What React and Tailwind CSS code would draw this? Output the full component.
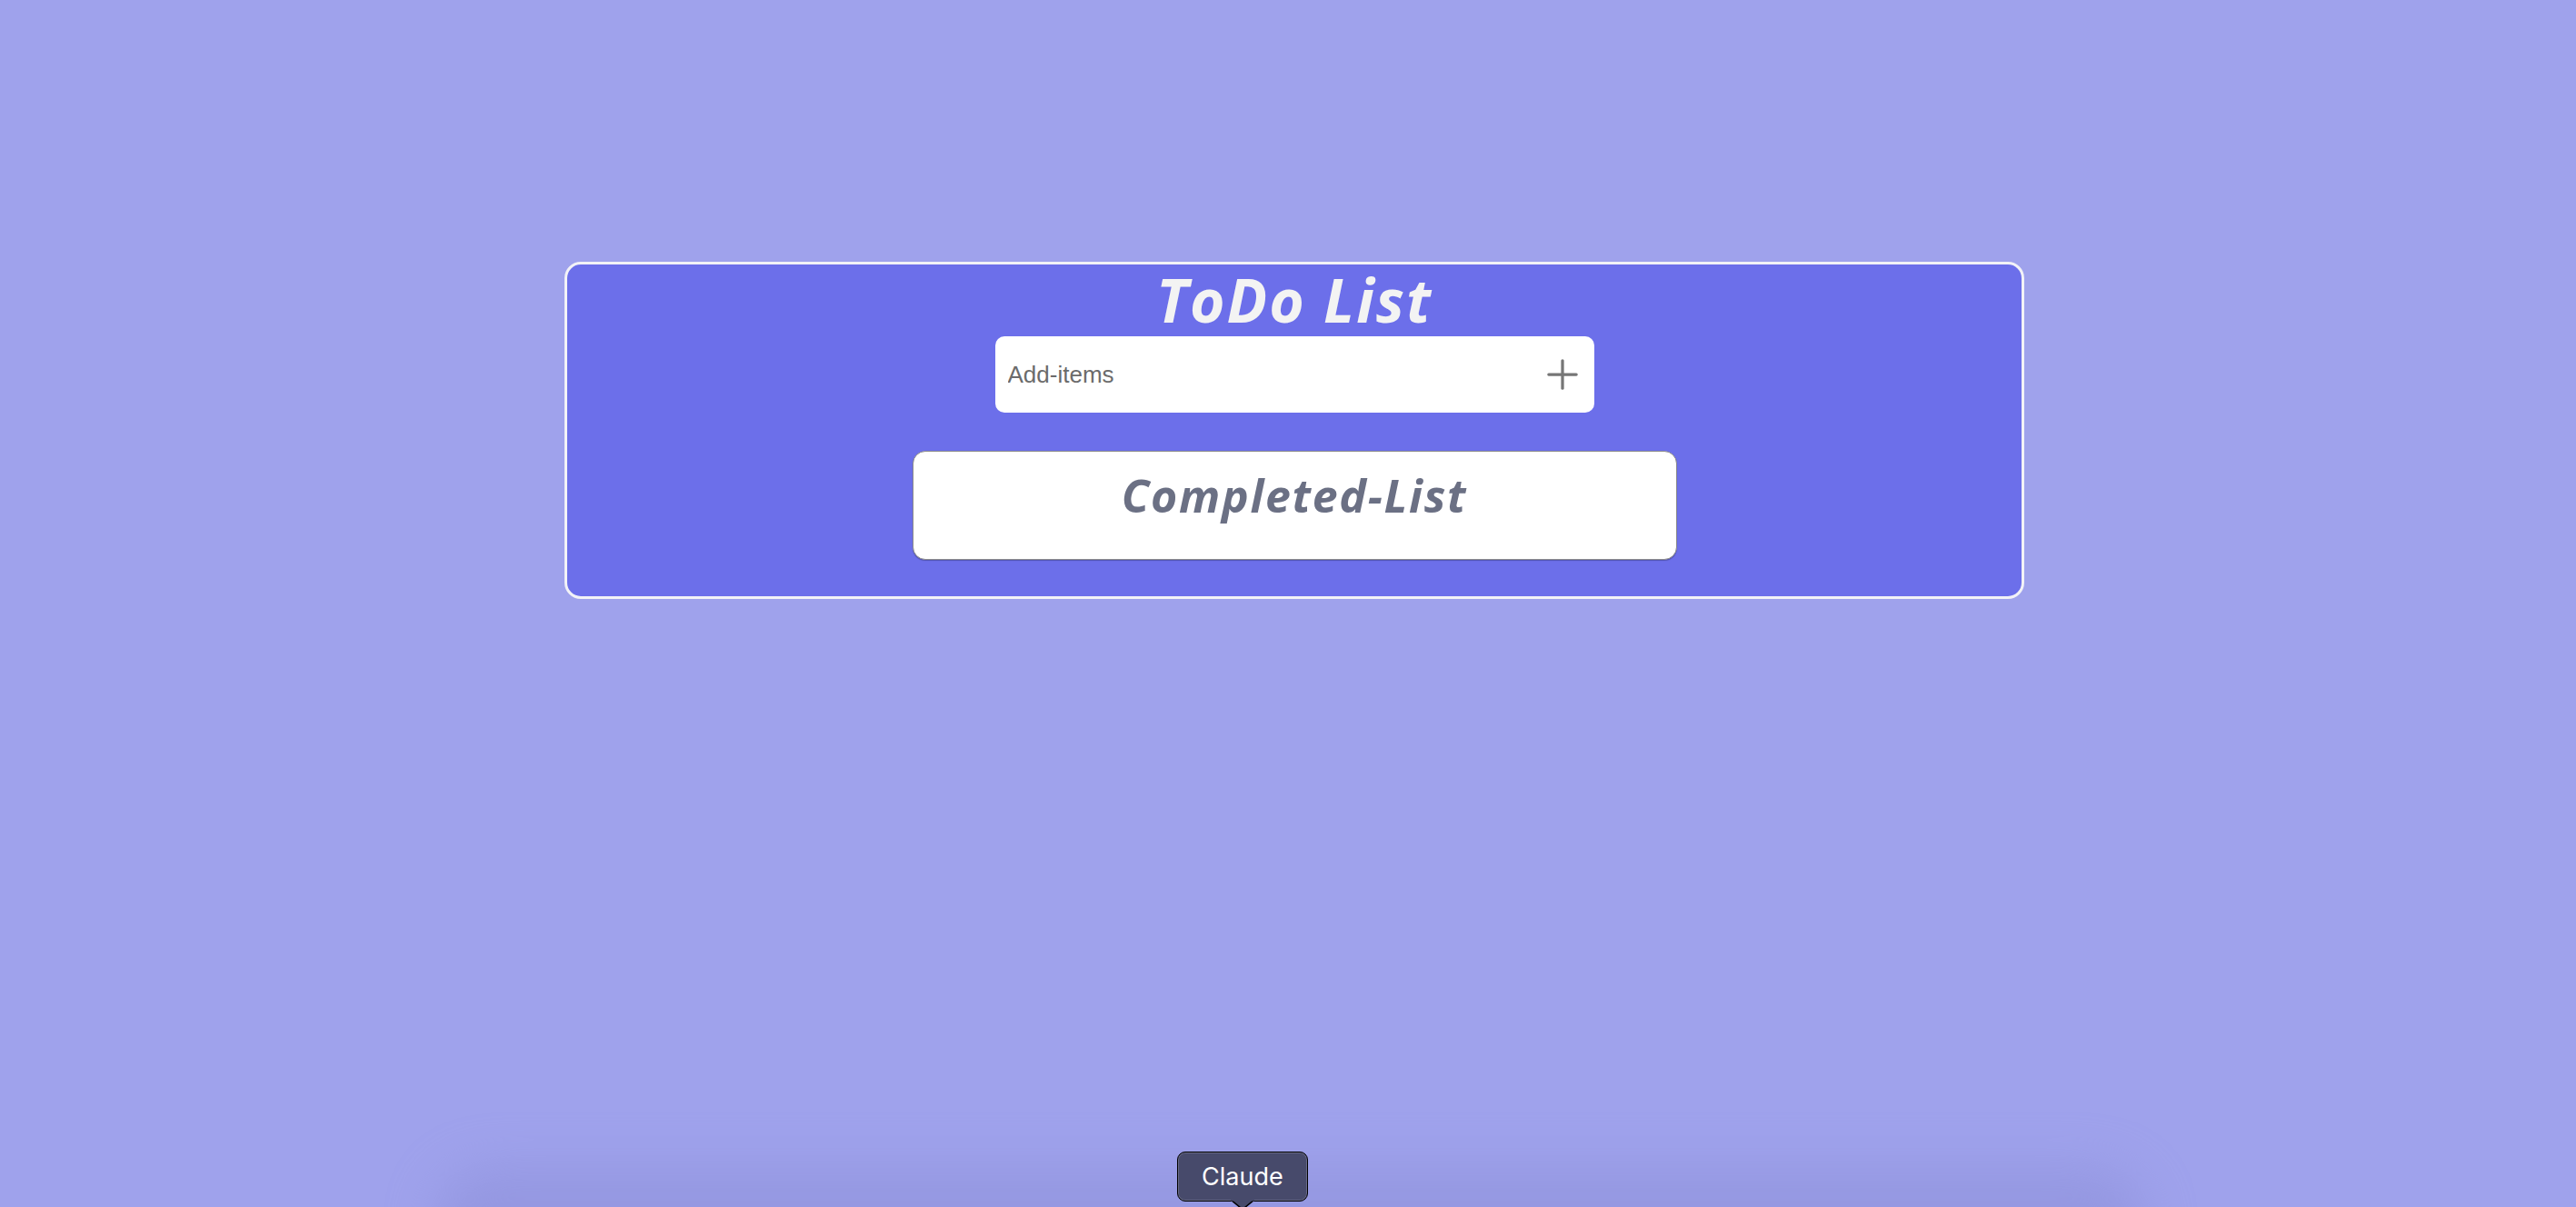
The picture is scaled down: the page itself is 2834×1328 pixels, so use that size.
import { Plus } from "lucide-react";

const App = () => {
  return (
    <div className="relative w-full h-[1328px] overflow-hidden bg-[#9fa2ec] font-['Open_Sans',sans-serif]">
      {/* main card */}
      <div className="flex justify-center pt-[288px] pl-[14px]">
        <div className="w-[1606px] flex flex-col items-center rounded-[18px] border-[3px] border-[#f2f2f7] bg-[#6c6fea] pb-[40px]">
          <h1 className="mt-[5px] text-[66px] leading-none font-bold italic text-[#f3f3f3] tracking-[2px]">
            ToDo List
          </h1>

          <div className="mt-[8px] w-[659px] h-[84px] flex items-center justify-between rounded-[10px] bg-white pl-[14px] pr-[9px]">
            <input
              type="text"
              placeholder="Add-items"
              className="flex-1 bg-transparent outline-none font-['Liberation_Sans',Arial,sans-serif] text-[26px] text-[#333] placeholder:text-[#6b6b6b]"
            />
            <Plus className="size-[52px] text-[#767676]" strokeWidth={1.5} />
          </div>

          <div className="mt-[42px] w-[841px] h-[120px] flex justify-center rounded-[14px] border border-[#8c8c8c] bg-white pt-[23px] shadow-[0_1px_1px_rgba(0,0,0,0.25)]">
            <h2 className="text-[50px] leading-none font-bold italic text-[#6b7084] tracking-[1.7px]">
              Completed-List
            </h2>
          </div>
        </div>
      </div>

      {/* dock shadow */}
      <div className="absolute left-[480px] top-[1285px] w-[1880px] h-[120px] rounded-[60px] bg-[#8a8dd6] opacity-50 blur-[28px]" />

      {/* dock tooltip */}
      <div className="absolute left-[1295px] top-[1267px] flex flex-col items-center">
        <div className="h-[55px] px-[26px] flex items-center rounded-[9px] border-[1.5px] border-black bg-[#474a6b] shadow-[inset_0_0_0_1px_rgba(255,255,255,0.18)]">
          <span className="font-['Inter',sans-serif] text-[27px] text-white leading-none">Claude</span>
        </div>
        <svg width="26" height="10" viewBox="0 0 26 10" className="-mt-[2px]">
          <path d="M0 0 L26 0 L15 9 Q13 10.5 11 9 Z" fill="#474a6b" stroke="#000" strokeWidth="1.5" />
          <rect x="0" y="0" width="26" height="1.4" fill="#474a6b" />
        </svg>
      </div>
    </div>
  );
};

export default App;
